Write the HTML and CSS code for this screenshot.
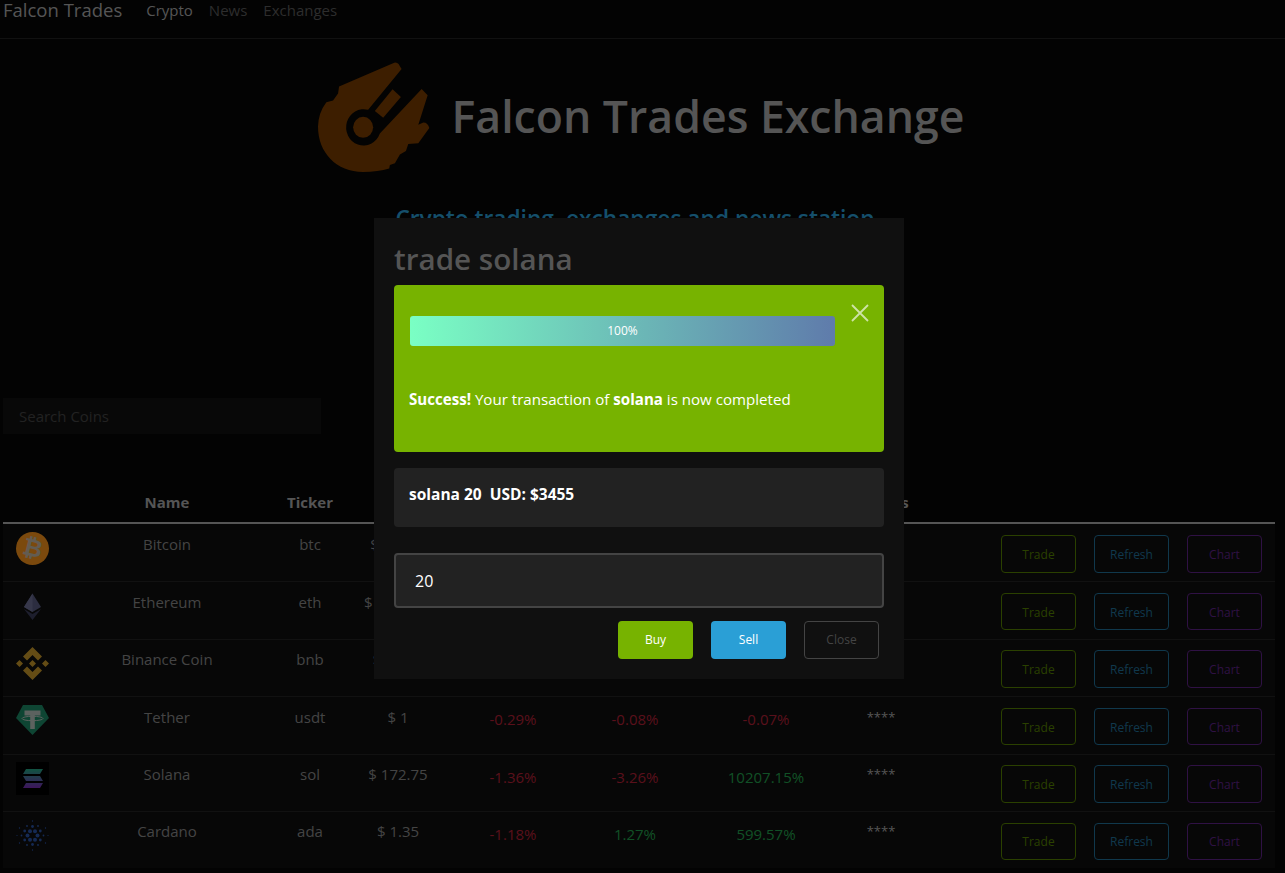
FILE: index.html
```html
<!DOCTYPE html>
<html lang="en">
<head>
<meta charset="utf-8">
<title>Falcon Trades</title>
<link rel="stylesheet" href="styles.css">
</head>
<body>
<div class="page">
  <nav class="nav">
    <a class="brand">Falcon Trades</a>
    <a class="nav-link active">Crypto</a>
    <a class="nav-link">News</a>
    <a class="nav-link">Exchanges</a>
  </nav>
  <header class="hero">
    <div class="hero-head">
      <svg class="logo" viewBox="55 35 335 315" preserveAspectRatio="none" aria-hidden="true">
        <path class="logo-fill" d="M283 37 Q291 35 296 41 L305 55 L205 172 A52 52 0 1 0 240 240 L365 112 L383 130 L355 215 L370 208 Q384 208 388 224 L355 268 L325 270 L318 290 L300 300 L285 325 L270 330 L268 340 Q235 350 190 350 C110 350 55 295 55 220 Q56 180 80 150 L100 145 L115 125 L118 105 Z"/>
        <circle class="logo-fill" cx="190" cy="222" r="30"/>
        <path class="logo-fill" d="M278 113 L303 135 L250 195 L225 175 Z"/>
      </svg>
      <h1 class="hero-title">Falcon Trades Exchange</h1>
    </div>
    <h2 class="hero-sub">Crypto trading, exchanges and news station</h2>
  </header>
  <input class="search" type="text" placeholder="Search Coins">
  <table class="coins">
    <colgroup>
      <col class="c-icon"><col class="c-name"><col class="c-ticker"><col class="c-price"><col class="c-h1"><col class="c-h24"><col class="c-d7"><col class="c-stars"><col class="c-actions">
    </colgroup>
    <thead>
      <tr><th></th><th>Name</th><th>Ticker</th><th>Price</th><th>1h</th><th>24h</th><th>7d</th><th>Wallets</th><th></th></tr>
    </thead>
    <tbody>
      <tr>
        <td class="icon-cell"><svg class="coin" viewBox="0 0 33 33"><circle cx="16.5" cy="16.5" r="16.5" fill="#f7931a"/><text x="16.5" y="24" class="btc-mark" transform="rotate(14 16.5 16.5)">₿</text></svg></td>
        <td>Bitcoin</td><td>btc</td><td>$ 46821</td><td class="pct down">-0.41%</td><td class="pct up">1.12%</td><td class="pct up">2.05%</td><td class="stars">****</td>
        <td class="actions-cell"><div class="actions"><button class="btn trade">Trade</button><button class="btn refresh">Refresh</button><button class="btn chart">Chart</button></div></td>
      </tr>
      <tr>
        <td class="icon-cell"><svg class="coin" viewBox="0 0 33 33"><path fill="#585b80" d="M16.5 3.5 25 17 16.5 22 8 17Z"/><path fill="#6c6f94" d="M16.5 3.5V22L8 17Z"/><path fill="#3a3c5a" d="M8 19 16.5 24 25 19 16.5 30Z"/></svg></td>
        <td>Ethereum</td><td>eth</td><td>$ 3241.12</td><td class="pct down">-0.63%</td><td class="pct up">0.84%</td><td class="pct up">3.17%</td><td class="stars">****</td>
        <td class="actions-cell"><div class="actions"><button class="btn trade">Trade</button><button class="btn refresh">Refresh</button><button class="btn chart">Chart</button></div></td>
      </tr>
      <tr>
        <td class="icon-cell"><svg class="coin" viewBox="0 0 33 33"><path fill="#c9992a" d="M16.5 0 26 9.5 22 13.5 16.5 8 11 13.5 7 9.5ZM16.5 33 26 23.5 22 19.5 16.5 25 11 19.5 7 23.5ZM16.5 13 20 16.5 16.5 20 13 16.5ZM3.5 13 7 16.5 3.5 20 0 16.5ZM29.5 13 33 16.5 29.5 20 26 16.5Z"/></svg></td>
        <td>Binance Coin</td><td>bnb</td><td>$ 411.5</td><td class="pct down">-0.22%</td><td class="pct up">1.93%</td><td class="pct up">4.30%</td><td class="stars">****</td>
        <td class="actions-cell"><div class="actions"><button class="btn trade">Trade</button><button class="btn refresh">Refresh</button><button class="btn chart">Chart</button></div></td>
      </tr>
      <tr>
        <td class="icon-cell"><svg class="coin" viewBox="0 0 33 33"><path fill="#1c8a66" d="M7 0H26L33 13 16.5 30 0 13Z"/><path fill="#b9c4bf" d="M8.5 5.5H24.5V10.5H18.8V24H14.2V10.5H8.5Z"/><ellipse cx="16.5" cy="13.5" rx="10.5" ry="2.2" fill="none" stroke="#b9c4bf" stroke-width="1"/></svg></td>
        <td>Tether</td><td>usdt</td><td>$ 1</td><td class="pct down">-0.29%</td><td class="pct down">-0.08%</td><td class="pct down">-0.07%</td><td class="stars">****</td>
        <td class="actions-cell"><div class="actions"><button class="btn trade">Trade</button><button class="btn refresh">Refresh</button><button class="btn chart">Chart</button></div></td>
      </tr>
      <tr>
        <td class="icon-cell"><svg class="coin" viewBox="0 0 33 33"><defs><linearGradient id="sol" x1="0" y1="0" x2="0" y2="1"><stop offset="0" stop-color="#22a884"/><stop offset="1" stop-color="#7a2bb8"/></linearGradient></defs><rect width="33" height="33" fill="#000"/><path fill="url(#sol)" d="M10 7H27L24 12H7ZM7 14H24L27 19H10ZM10 21H27L24 26H7Z"/></svg></td>
        <td>Solana</td><td>sol</td><td>$ 172.75</td><td class="pct down">-1.36%</td><td class="pct down">-3.26%</td><td class="pct up">10207.15%</td><td class="stars">****</td>
        <td class="actions-cell"><div class="actions"><button class="btn trade">Trade</button><button class="btn refresh">Refresh</button><button class="btn chart">Chart</button></div></td>
      </tr>
      <tr>
        <td class="icon-cell"><svg class="coin" viewBox="0 0 33 33"><g class="ada"><circle cx="21.5" cy="16.5" r="2"/><circle cx="19" cy="20.8" r="2"/><circle cx="14" cy="20.8" r="2"/><circle cx="11.5" cy="16.5" r="2"/><circle cx="14" cy="12.2" r="2"/><circle cx="19" cy="12.2" r="2"/><circle cx="24.3" cy="21" r="1.4"/><circle cx="16.5" cy="25.5" r="1.4"/><circle cx="8.7" cy="21" r="1.4"/><circle cx="8.7" cy="12" r="1.4"/><circle cx="16.5" cy="7.5" r="1.4"/><circle cx="24.3" cy="12" r="1.4"/><circle cx="27.5" cy="16.5" r=".9"/><circle cx="22" cy="26" r=".9"/><circle cx="11" cy="26" r=".9"/><circle cx="5.5" cy="16.5" r=".9"/><circle cx="11" cy="7" r=".9"/><circle cx="22" cy="7" r=".9"/><circle cx="29.5" cy="24" r=".7"/><circle cx="16.5" cy="31" r=".7"/><circle cx="3.5" cy="24" r=".7"/><circle cx="3.5" cy="9" r=".7"/><circle cx="16.5" cy="2" r=".7"/><circle cx="29.5" cy="9" r=".7"/><circle cx="32" cy="16.5" r=".6"/><circle cx="1" cy="16.5" r=".6"/></g></svg></td>
        <td>Cardano</td><td>ada</td><td>$ 1.35</td><td class="pct down">-1.18%</td><td class="pct up">1.27%</td><td class="pct up">599.57%</td><td class="stars">****</td>
        <td class="actions-cell"><div class="actions"><button class="btn trade">Trade</button><button class="btn refresh">Refresh</button><button class="btn chart">Chart</button></div></td>
      </tr>
    </tbody>
  </table>
</div>

<div class="backdrop">
  <div class="modal">
    <h3 class="modal-title">trade solana</h3>
    <div class="alert">
      <button class="alert-close" aria-label="Close"><svg viewBox="0 0 18 18"><path d="M1 1 17 17M17 1 1 17"/></svg></button>
      <div class="progress"><span>100%</span></div>
      <p class="alert-text"><strong>Success!</strong> Your transaction of <strong>solana</strong> is now completed</p>
    </div>
    <div class="quote"><strong>solana 20&nbsp; USD: $3455</strong></div>
    <input class="amount" type="text" value="20">
    <div class="modal-actions">
      <button class="mbtn buy">Buy</button>
      <button class="mbtn sell">Sell</button>
      <button class="mbtn close">Close</button>
    </div>
  </div>
</div>
</body>
</html>
```
FILE: styles.css
```css
* { box-sizing: border-box; }
html, body { height: 100%; }
body {
  margin: 0;
  background: #060606;
  color: #aaa;
  font-family: "Open Sans", "Noto Sans", sans-serif;
  font-size: 15px;
  line-height: 24px;
  overflow: hidden;
}
.page { margin: 0 10px 0 3px; }
.nav {
  display: flex;
  align-items: center;
  height: 39px;
  margin: 0 -10px 0 -3px;
  padding: 0 0 18px 3px;
  border-bottom: 1px solid #222;
  line-height: 20px;
}
.brand { font-size: 18.5px; color: #aaa; margin-right: 24px; }
.nav-link { color: #5a5a5a; margin-right: 16px; }
.nav-link.active { color: #aaa; }
.hero { height: 359px; padding-top: 23px; }
.hero-head { display: flex; align-items: center; justify-content: center; gap: 22px; height: 110px; margin-left: 4px; }
.logo { width: 112px; height: 110px; flex: none; }
.logo-fill { fill: #7a3c00; }
.hero-title { margin: 0 0 2px; font-size: 44.6px; line-height: 56px; font-weight: 600; color: #aaa; }
.hero-sub { margin: 31px 0 0; padding-right: 8px; font-size: 22.7px; line-height: 32px; font-weight: 600; color: #2a9fd6; text-align: center; }
.search {
  display: block;
  width: 318px;
  height: 36px;
  padding: 0 16px;
  border: 0;
  background: #111;
  color: #aaa;
  font: inherit;
}
.search::placeholder { color: #444; }
.coins {
  width: 1272px;
  margin-top: 50px;
  table-layout: fixed;
  border-collapse: separate;
  border-spacing: 0;
  text-align: center;
}
.c-icon { width: 59px; }
.c-name { width: 210px; }
.c-ticker { width: 76px; }
.c-price { width: 100px; }
.c-h1 { width: 130px; }
.c-h24 { width: 114px; }
.c-d7 { width: 148px; }
.c-stars { width: 82px; }
.c-actions { width: 353px; }
.coins th {
  height: 40px;
  padding: 0 0 8px;
  border-bottom: 2px solid #aaa;
  vertical-align: bottom;
  font-weight: 700;
  color: #aaa;
  line-height: 24px;
}
.coins td {
  height: 57.4px;
  padding: 7.5px 0 0;
  border-top: 1px solid #222;
  border-bottom: 0;
  background: #0e0e0e;
  vertical-align: top;
  color: #888;
}
.coins tbody tr:first-child td { border-top: 0; padding-top: 8px; }
.coins td.icon-cell { padding-left: 13px; text-align: left; }
.coin { display: block; width: 33px; height: 33px; }
.btc-mark { fill: #c4b8a4; font-family: "DejaVu Sans", sans-serif; font-size: 24px; font-weight: 700; text-anchor: middle; }
.ada circle { fill: #2a54a8; }
.coins td.pct { padding-top: 10px; }
.coins td.down { color: #b32036; }
.coins td.up { color: #23a04c; }
.coins td.stars { color: #aaa; font-size: 13px; }
.coins td.actions-cell { padding: 10.6px 13px 0 0; }
.coins tbody tr:first-child td.actions-cell { padding-top: 11px; }
.actions { display: flex; justify-content: flex-end; gap: 18px; }
.btn {
  width: 75px;
  height: 37.5px;
  padding: 2px 0 0;
  background: transparent;
  border: 1px solid currentColor;
  border-radius: 4px;
  font: 12px/20px "Open Sans", sans-serif;
}
.trade { color: #558000; }
.refresh { color: #207099; }
.chart { color: #5f2388; }

.backdrop {
  position: fixed;
  inset: 0;
  background: rgba(0, 0, 0, .5);
  display: flex;
  justify-content: center;
  padding: 218px 7px 0 0;
}
.modal {
  width: 530px;
  height: 461px;
  padding: 20px;
  background: #101010;
}
.modal-title {
  margin: 0 0 8px;
  font-size: 29.6px;
  line-height: 41px;
  height: 39px;
  font-weight: 600;
  color: #555;
}
.alert {
  position: relative;
  height: 167px;
  padding: 31px 15px 0 16px;
  background: #77b300;
  border-radius: 4px;
  color: #fff;
}
.alert-close {
  position: absolute;
  top: 19px;
  right: 15px;
  width: 18px;
  height: 18px;
  padding: 0;
  border: 0;
  background: none;
}
.alert-close svg { display: block; width: 18px; height: 18px; }
.alert-close path { stroke: #cfe3a6; stroke-width: 1.8; fill: none; }
.progress {
  width: 425px;
  height: 30px;
  border-radius: 3px;
  background: linear-gradient(90deg, #7affc4, #5f7bab);
  color: #fff;
  font-size: 12px;
  line-height: 30px;
  text-align: center;
}
.alert-text { margin: 41px 0 0 -1px; color: #fff; font-size: 15.1px; }
.alert-text strong { font-weight: 700; }
.quote {
  height: 59px;
  margin-top: 16px;
  padding: 14px 15px 0;
  background: #222;
  border-radius: 4px;
  color: #fff;
  font-size: 15.5px;
}
.amount {
  display: block;
  width: 100%;
  height: 55px;
  margin-top: 26px;
  padding: 0 18px 0 19px;
  background: #222;
  border: 2px solid #444;
  border-radius: 4px;
  color: #fff;
  font: inherit;
  font-size: 16px;
}
.modal-actions { display: flex; justify-content: flex-end; gap: 18px; margin: 13px 5px 0 0; }
.mbtn {
  width: 75px;
  height: 38px;
  padding: 0;
  border: 1px solid transparent;
  border-radius: 4px;
  color: #fff;
  font: 12px/20px "Open Sans", sans-serif;
}
.buy { background: #77b300; }
.sell { background: #2a9fd6; }
.close { background: transparent; border-color: #444; color: #444; }
```
